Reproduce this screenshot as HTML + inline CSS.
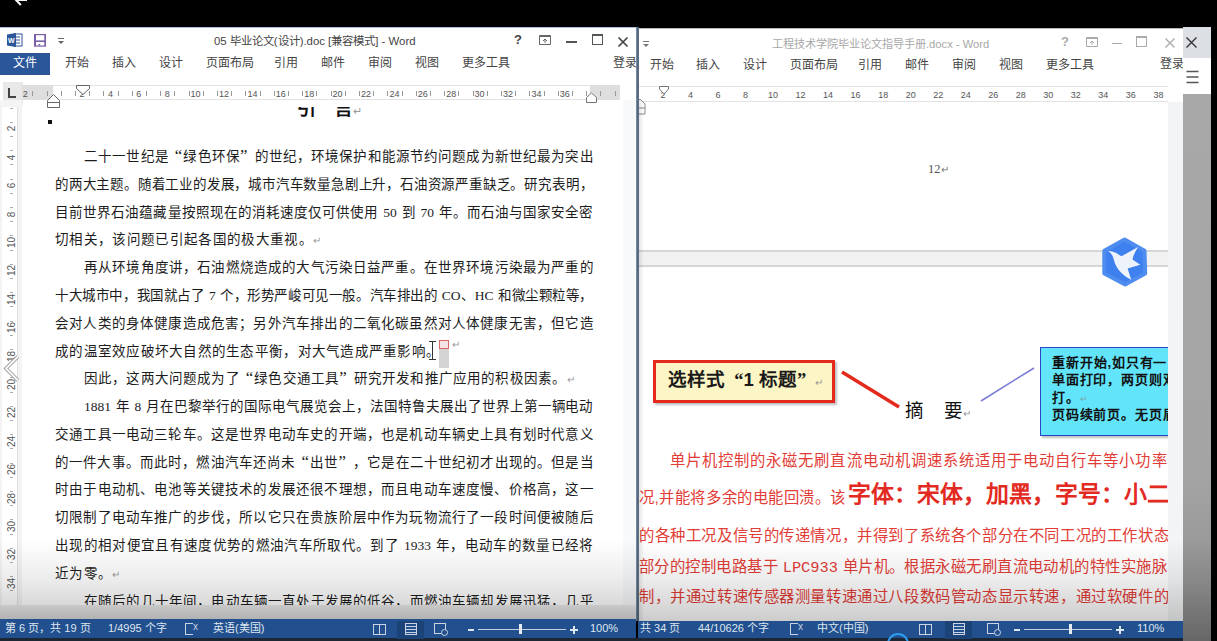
<!DOCTYPE html><html lang="zh-CN"><head><meta charset="utf-8"><style>
*{margin:0;padding:0;box-sizing:border-box}
html,body{width:1217px;height:641px;overflow:hidden;background:#000;font-family:"Liberation Sans",sans-serif}
.a{position:absolute}
.tab{position:absolute;font-size:12px;color:#444;white-space:nowrap;line-height:14px;margin-top:-1px}
.rn{position:absolute;font-size:9px;color:#555;width:20px;margin-left:-10px;text-align:center;line-height:10px}
.tk{position:absolute;width:1px;height:5px;background:#999}
.ln{position:absolute;height:20px;color:#1c1c1c;white-space:nowrap;line-height:20px;text-align:justify;text-align-last:justify}
.rl{position:absolute;height:20px;color:#e03030;white-space:nowrap;text-align:justify;text-align-last:justify;line-height:20px;font-family:"Liberation Serif",serif}
.sb{position:absolute;font-size:11px;color:#dfe6f0;white-space:nowrap;line-height:12px}
.vn{position:absolute;font-size:10px;color:#555;transform:rotate(-90deg);width:14px;text-align:center;line-height:9px}
</style></head><body>
<svg class="a" style="left:10px;top:0" width="24" height="8"><path d="M17,0 H5.5 M5.5,-0.5 L10.8,5" fill="none" stroke="#f4f4f4" stroke-width="2"/></svg>
<div class="a" style="left:0;top:27px;width:636px;height:614px;background:#fff;overflow:hidden">
<div class="a" style="left:0;top:0;width:636px;height:1px;background:#a9bedd"></div>
<svg class="a" style="left:6px;top:5px" width="17" height="16"><rect x="8" y="2" width="8" height="12" fill="#fff" stroke="#2b579a" stroke-width="1"/><path d="M10,5h4M10,8h4M10,11h4" stroke="#2b579a" stroke-width="1"/><path d="M1,2.5 L10,1 V15 L1,13.5z" fill="#2b579a"/><text x="2" y="11" font-size="7" font-weight="bold" fill="#fff" font-family="Liberation Sans">W</text></svg>
<svg class="a" style="left:33px;top:6px" width="14" height="14"><rect x="1" y="1" width="12" height="12.7" fill="#7b5fa8"/><rect x="3" y="2.2" width="8.3" height="5.2" fill="#fff"/><rect x="3" y="9" width="8.3" height="3.5" fill="#fff"/><rect x="5.5" y="11" width="1.7" height="1.5" fill="#7b5fa8"/></svg>
<svg class="a" style="left:57px;top:10px" width="9" height="8"><path d="M1,1.5h6" stroke="#666" stroke-width="1"/><path d="M1,4 h6 l-3,3z" fill="#666"/></svg>
<div class="a" style="left:214px;top:5px;font-size:11.4px;color:#444;white-space:nowrap">05 毕业论文(设计).doc [兼容模式] - Word</div>
<div class="a" style="left:514px;top:5px;font-size:13px;color:#444;font-weight:bold">?</div>
<svg class="a" style="left:538px;top:7px" width="14" height="12"><path d="M1.5,1.5h11v9h-11z" fill="none" stroke="#666" stroke-width="1"/><path d="M1.5,2.5h11" stroke="#666" stroke-width="1"/><path d="M7,9V5M5,7l2,-2l2,2" fill="none" stroke="#666" stroke-width="1"/></svg>
<div class="a" style="left:566px;top:14px;width:11px;height:1.5px;background:#555"></div>
<div class="a" style="left:592px;top:7px;width:11px;height:11px;border:1px solid #555;border-top-width:2px"></div>
<svg class="a" style="left:617px;top:9px" width="12" height="12"><path d="M1.5,1.5 L10.5,10.5 M10.5,1.5 L1.5,10.5" stroke="#444" stroke-width="1.7"/></svg>
<div class="a" style="left:0;top:26px;width:50px;height:22px;background:#2b579a"></div>
<div class="tab" style="left:13px;top:30px;color:#fff">文件</div>
<div class="tab" style="left:65px;top:30px;color:#444">开始</div>
<div class="tab" style="left:112px;top:30px;color:#444">插入</div>
<div class="tab" style="left:159px;top:30px;color:#444">设计</div>
<div class="tab" style="left:206px;top:30px;color:#444">页面布局</div>
<div class="tab" style="left:274px;top:30px;color:#444">引用</div>
<div class="tab" style="left:321px;top:30px;color:#444">邮件</div>
<div class="tab" style="left:368px;top:30px;color:#444">审阅</div>
<div class="tab" style="left:415px;top:30px;color:#444">视图</div>
<div class="tab" style="left:462px;top:30px;color:#444">更多工具</div>
<div class="tab" style="left:613px;top:30px">登录</div>
<div class="a" style="left:3px;top:55px;width:20px;height:23px;background:#e8e8e8"></div>
<div class="a" style="left:8px;top:61px;width:8px;height:10px;border-left:2px solid #444;border-bottom:2px solid #444"></div>
<div class="a" style="left:22px;top:58px;width:598px;height:15px;background:#fff;border-top:1px solid #e3e3e3;border-bottom:1px solid #e3e3e3"></div>
<div class="a" style="left:22px;top:58px;width:31px;height:15px;background:#dedede"></div>
<div class="a" style="left:590px;top:58px;width:30px;height:15px;background:#dedede"></div>
<div class="rn" style="left:25.2px;top:62px">2</div>
<div class="rn" style="left:82.0px;top:62px">2</div>
<div class="rn" style="left:110.4px;top:62px">4</div>
<div class="rn" style="left:138.8px;top:62px">6</div>
<div class="rn" style="left:167.2px;top:62px">8</div>
<div class="rn" style="left:195.6px;top:62px">10</div>
<div class="rn" style="left:224.0px;top:62px">12</div>
<div class="rn" style="left:252.4px;top:62px">14</div>
<div class="rn" style="left:280.8px;top:62px">16</div>
<div class="rn" style="left:309.2px;top:62px">18</div>
<div class="rn" style="left:337.6px;top:62px">20</div>
<div class="rn" style="left:366.0px;top:62px">22</div>
<div class="rn" style="left:394.4px;top:62px">24</div>
<div class="rn" style="left:422.8px;top:62px">26</div>
<div class="rn" style="left:451.2px;top:62px">28</div>
<div class="rn" style="left:479.6px;top:62px">30</div>
<div class="rn" style="left:508.0px;top:62px">32</div>
<div class="rn" style="left:536.4px;top:62px">34</div>
<div class="rn" style="left:564.8px;top:62px">36</div>
<div class="tk" style="left:32.3px;top:64px"></div>
<div class="tk" style="left:46.5px;top:64px"></div>
<div class="tk" style="left:60.7px;top:64px"></div>
<div class="tk" style="left:74.9px;top:64px"></div>
<div class="tk" style="left:89.1px;top:64px"></div>
<div class="tk" style="left:103.3px;top:64px"></div>
<div class="tk" style="left:117.5px;top:64px"></div>
<div class="tk" style="left:131.7px;top:64px"></div>
<div class="tk" style="left:145.9px;top:64px"></div>
<div class="tk" style="left:160.1px;top:64px"></div>
<div class="tk" style="left:174.3px;top:64px"></div>
<div class="tk" style="left:188.5px;top:64px"></div>
<div class="tk" style="left:202.7px;top:64px"></div>
<div class="tk" style="left:216.9px;top:64px"></div>
<div class="tk" style="left:231.1px;top:64px"></div>
<div class="tk" style="left:245.3px;top:64px"></div>
<div class="tk" style="left:259.5px;top:64px"></div>
<div class="tk" style="left:273.7px;top:64px"></div>
<div class="tk" style="left:287.9px;top:64px"></div>
<div class="tk" style="left:302.1px;top:64px"></div>
<div class="tk" style="left:316.3px;top:64px"></div>
<div class="tk" style="left:330.5px;top:64px"></div>
<div class="tk" style="left:344.7px;top:64px"></div>
<div class="tk" style="left:358.9px;top:64px"></div>
<div class="tk" style="left:373.1px;top:64px"></div>
<div class="tk" style="left:387.3px;top:64px"></div>
<div class="tk" style="left:401.5px;top:64px"></div>
<div class="tk" style="left:415.7px;top:64px"></div>
<div class="tk" style="left:429.9px;top:64px"></div>
<div class="tk" style="left:444.1px;top:64px"></div>
<div class="tk" style="left:458.3px;top:64px"></div>
<div class="tk" style="left:472.5px;top:64px"></div>
<div class="tk" style="left:486.7px;top:64px"></div>
<div class="tk" style="left:500.9px;top:64px"></div>
<div class="tk" style="left:515.1px;top:64px"></div>
<div class="tk" style="left:529.3px;top:64px"></div>
<div class="tk" style="left:543.5px;top:64px"></div>
<div class="tk" style="left:557.7px;top:64px"></div>
<div class="tk" style="left:571.9px;top:64px"></div>
<div class="tk" style="left:586.1px;top:64px"></div>
<div class="tk" style="left:600.3px;top:64px"></div>
<div class="tk" style="left:614.5px;top:64px"></div>
<svg class="a" style="left:45px;top:57px" width="70" height="25"><path d="M31.5,1.5 h13 v3 l-6.5,6 l-6.5,-6z" fill="#fff" stroke="#666" stroke-width="1"/><path d="M2.5,16.5 l6,-6 l6,6 v2 h-12z M2.5,18.5 h12 v5 h-12z" fill="#fff" stroke="#666" stroke-width="1"/></svg>
<svg class="a" style="left:585px;top:65px" width="13" height="12"><path d="M1.5,10.5 v-5 l5,-4.5 l5,4.5 v5z" fill="#fff" stroke="#777" stroke-width="1"/></svg>
<div class="a" style="left:0;top:73px;width:22px;height:541px;background:#f4f4f4"></div>
<div class="a" style="left:2px;top:80px;width:16px;height:534px;background:#fff;border-right:1px solid #e2e2e2"></div>
<div class="vn" style="left:4px;top:97.4px">2</div>
<div class="vn" style="left:4px;top:125.8px">4</div>
<div class="vn" style="left:4px;top:154.2px">6</div>
<div class="vn" style="left:4px;top:182.6px">8</div>
<div class="vn" style="left:4px;top:211.0px">10</div>
<div class="vn" style="left:4px;top:239.4px">12</div>
<div class="vn" style="left:4px;top:267.8px">14</div>
<div class="vn" style="left:4px;top:296.2px">16</div>
<div class="vn" style="left:4px;top:324.6px">18</div>
<div class="vn" style="left:4px;top:353.0px">20</div>
<div class="vn" style="left:4px;top:381.4px">22</div>
<div class="vn" style="left:4px;top:409.8px">24</div>
<div class="vn" style="left:4px;top:438.2px">26</div>
<div class="vn" style="left:4px;top:466.6px">28</div>
<div class="vn" style="left:4px;top:495.0px">30</div>
<div class="vn" style="left:4px;top:523.4px">32</div>
<div class="vn" style="left:4px;top:551.8px">34</div>
<div class="vn" style="left:4px;top:580.2px">36</div>
<div class="a" style="left:9.5px;top:80.6px;width:3px;height:1px;background:#aaa"></div>
<div class="a" style="left:9.5px;top:94.8px;width:3px;height:1px;background:#aaa"></div>
<div class="a" style="left:9.5px;top:109.0px;width:3px;height:1px;background:#aaa"></div>
<div class="a" style="left:9.5px;top:123.2px;width:3px;height:1px;background:#aaa"></div>
<div class="a" style="left:9.5px;top:137.4px;width:3px;height:1px;background:#aaa"></div>
<div class="a" style="left:9.5px;top:151.6px;width:3px;height:1px;background:#aaa"></div>
<div class="a" style="left:9.5px;top:165.8px;width:3px;height:1px;background:#aaa"></div>
<div class="a" style="left:9.5px;top:180.0px;width:3px;height:1px;background:#aaa"></div>
<div class="a" style="left:9.5px;top:194.2px;width:3px;height:1px;background:#aaa"></div>
<div class="a" style="left:9.5px;top:208.4px;width:3px;height:1px;background:#aaa"></div>
<div class="a" style="left:9.5px;top:222.6px;width:3px;height:1px;background:#aaa"></div>
<div class="a" style="left:9.5px;top:236.8px;width:3px;height:1px;background:#aaa"></div>
<div class="a" style="left:9.5px;top:251.0px;width:3px;height:1px;background:#aaa"></div>
<div class="a" style="left:9.5px;top:265.2px;width:3px;height:1px;background:#aaa"></div>
<div class="a" style="left:9.5px;top:279.4px;width:3px;height:1px;background:#aaa"></div>
<div class="a" style="left:9.5px;top:293.6px;width:3px;height:1px;background:#aaa"></div>
<div class="a" style="left:9.5px;top:307.8px;width:3px;height:1px;background:#aaa"></div>
<div class="a" style="left:9.5px;top:322.0px;width:3px;height:1px;background:#aaa"></div>
<div class="a" style="left:9.5px;top:336.2px;width:3px;height:1px;background:#aaa"></div>
<div class="a" style="left:9.5px;top:350.4px;width:3px;height:1px;background:#aaa"></div>
<div class="a" style="left:9.5px;top:364.6px;width:3px;height:1px;background:#aaa"></div>
<div class="a" style="left:9.5px;top:378.8px;width:3px;height:1px;background:#aaa"></div>
<div class="a" style="left:9.5px;top:393.0px;width:3px;height:1px;background:#aaa"></div>
<div class="a" style="left:9.5px;top:407.2px;width:3px;height:1px;background:#aaa"></div>
<div class="a" style="left:9.5px;top:421.4px;width:3px;height:1px;background:#aaa"></div>
<div class="a" style="left:9.5px;top:435.6px;width:3px;height:1px;background:#aaa"></div>
<div class="a" style="left:9.5px;top:449.8px;width:3px;height:1px;background:#aaa"></div>
<div class="a" style="left:9.5px;top:464.0px;width:3px;height:1px;background:#aaa"></div>
<div class="a" style="left:9.5px;top:478.2px;width:3px;height:1px;background:#aaa"></div>
<div class="a" style="left:9.5px;top:492.4px;width:3px;height:1px;background:#aaa"></div>
<div class="a" style="left:9.5px;top:506.6px;width:3px;height:1px;background:#aaa"></div>
<div class="a" style="left:9.5px;top:520.8px;width:3px;height:1px;background:#aaa"></div>
<div class="a" style="left:9.5px;top:535.0px;width:3px;height:1px;background:#aaa"></div>
<div class="a" style="left:9.5px;top:549.2px;width:3px;height:1px;background:#aaa"></div>
<div class="a" style="left:9.5px;top:563.4px;width:3px;height:1px;background:#aaa"></div>
<div class="a" style="left:9.5px;top:577.6px;width:3px;height:1px;background:#aaa"></div>
<div class="a" style="left:9.5px;top:591.8px;width:3px;height:1px;background:#aaa"></div>
<div class="a" style="left:623px;top:73px;width:13px;height:541px;background:#f8f9fa"></div>
<div class="a" style="left:290px;top:80px;width:80px;height:13px;overflow:hidden"><div style="position:absolute;left:7px;top:-9px;font-size:19px;font-weight:bold;color:#111;white-space:nowrap;line-height:22px">引</div><div style="position:absolute;left:44px;top:-9px;font-size:19px;font-weight:bold;color:#111;white-space:nowrap;line-height:22px">言<span style="font-size:11px;font-weight:normal;color:#999">↵</span></div></div>
<div class="a" style="left:48px;top:93px;width:4px;height:4px;background:#111"></div>
<div class="ln" style="left:84px;top:120.0px;width:508.5px;font-size:13.5px">二十一世纪是<span style="display:inline-block;width:1em;text-align:right;text-align-last:right"><span style="font-family:'Liberation Serif',serif;font-size:1.25em;line-height:1px">“</span></span>绿色环保<span style="display:inline-block;width:1em;text-align:left;text-align-last:left"><span style="font-family:'Liberation Serif',serif;font-size:1.25em;line-height:1px">”</span></span>的世纪，环境保护和能源节约问题成为新世纪最为突出</div>
<div class="ln" style="left:55px;top:147.8px;width:537.5px;font-size:13.5px">的两大主题。随着工业的发展，城市汽车数量急剧上升，石油资源严重缺乏。研究表明，</div>
<div class="ln" style="left:55px;top:175.6px;width:537.5px;font-size:13.5px">目前世界石油蕴藏量按照现在的消耗速度仅可供使用 <span style="font-family:'Liberation Serif',serif">50</span> 到 <span style="font-family:'Liberation Serif',serif">70</span> 年。而石油与国家安全密</div>
<div class="ln" style="left:55px;top:203.3px;width:256.5px;font-size:13.5px">切相关，该问题已引起各国的极大重视。</div>
<div class="ln" style="left:313px;top:203.3px;font-size:13.5px;text-align:left;text-align-last:left"><span style="color:#999;font-size:10px">↵</span></div>
<div class="ln" style="left:84px;top:231.1px;width:508.5px;font-size:13.5px">再从环境角度讲，石油燃烧造成的大气污染日益严重。在世界环境污染最为严重的</div>
<div class="ln" style="left:55px;top:258.9px;width:537.5px;font-size:13.5px">十大城市中，我国就占了 <span style="font-family:'Liberation Serif',serif">7</span> 个，形势严峻可见一般。汽车排出的 <span style="font-family:'Liberation Serif',serif">CO</span>、<span style="font-family:'Liberation Serif',serif">HC</span> 和微尘颗粒等，</div>
<div class="ln" style="left:55px;top:286.7px;width:537.5px;font-size:13.5px">会对人类的身体健康造成危害；另外汽车排出的二氧化碳虽然对人体健康无害，但它造</div>
<div class="ln" style="left:55px;top:314.5px;width:384.0px;font-size:13.5px">成的温室效应破坏大自然的生态平衡，对大气造成严重影响。</div>
<div class="ln" style="left:84px;top:342.2px;width:481.0px;font-size:13.5px">因此，这两大问题成为了<span style="display:inline-block;width:1em;text-align:right;text-align-last:right"><span style="font-family:'Liberation Serif',serif;font-size:1.25em;line-height:1px">“</span></span>绿色交通工具<span style="display:inline-block;width:1em;text-align:left;text-align-last:left"><span style="font-family:'Liberation Serif',serif;font-size:1.25em;line-height:1px">”</span></span>研究开发和推广应用的积极因素。</div>
<div class="ln" style="left:567px;top:342.2px;font-size:13.5px;text-align:left;text-align-last:left"><span style="color:#999;font-size:10px">↵</span></div>
<div class="ln" style="left:84px;top:370.0px;width:508.5px;font-size:13.5px"><span style="font-family:'Liberation Serif',serif">1881</span> 年 <span style="font-family:'Liberation Serif',serif">8</span> 月在巴黎举行的国际电气展览会上，法国特鲁夫展出了世界上第一辆电动</div>
<div class="ln" style="left:55px;top:397.8px;width:537.5px;font-size:13.5px">交通工具一电动三轮车。这是世界电动车史的开端，也是机动车辆史上具有划时代意义</div>
<div class="ln" style="left:55px;top:425.6px;width:537.5px;font-size:13.5px">的一件大事。而此时，燃油汽车还尚未<span style="display:inline-block;width:1em;text-align:right;text-align-last:right"><span style="font-family:'Liberation Serif',serif;font-size:1.25em;line-height:1px">“</span></span>出世<span style="display:inline-block;width:1em;text-align:left;text-align-last:left"><span style="font-family:'Liberation Serif',serif;font-size:1.25em;line-height:1px">”</span></span>，它是在二十世纪初才出现的。但是当</div>
<div class="ln" style="left:55px;top:453.4px;width:537.5px;font-size:13.5px">时由于电动机、电池等关键技术的发展还很不理想，而且电动车速度慢、价格高，这一</div>
<div class="ln" style="left:55px;top:481.1px;width:537.5px;font-size:13.5px">切限制了电动车推广的步伐，所以它只在贵族阶层中作为玩物流行了一段时间便被随后</div>
<div class="ln" style="left:55px;top:508.9px;width:537.5px;font-size:13.5px">出现的相对便宜且有速度优势的燃油汽车所取代。到了 <span style="font-family:'Liberation Serif',serif">1933</span> 年，电动车的数量已经将</div>
<div class="ln" style="left:55px;top:536.7px;width:56.0px;font-size:13.5px">近为零。</div>
<div class="ln" style="left:112px;top:536.7px;font-size:13.5px;text-align:left;text-align-last:left"><span style="color:#999;font-size:10px">↵</span></div>
<div class="ln" style="left:84px;top:564.5px;width:508.5px;font-size:13.5px">在随后的几十年间，电动车辆一直处于发展的低谷，而燃油车辆却发展迅猛，几乎</div>
<div class="a" style="left:429px;top:314px;width:7px;height:1px;background:#333"></div><div class="a" style="left:432px;top:314px;width:1.2px;height:18px;background:#333"></div><div class="a" style="left:429px;top:332px;width:7px;height:1px;background:#333"></div>
<div class="a" style="left:439px;top:315px;width:10px;height:26px;background:#d4d4d4"></div>
<div class="a" style="left:439px;top:313px;width:10px;height:9px;border:1px solid #d66;background:#f4e4e4"></div>
<div class="a" style="left:452px;top:312px;font-size:10px;color:#999;line-height:12px">↵</div>
</div>
<div class="a" style="left:638px;top:28px;width:545px;height:613px;background:#fff;overflow:hidden">
<div class="a" style="left:0;top:0;width:545px;height:1px;background:#b8b8b8"></div>
<svg class="a" style="left:4px;top:12px" width="9" height="8"><path d="M1,1.5h6" stroke="#777" stroke-width="1"/><path d="M1,4 h6 l-3,3z" fill="#777"/></svg>
<div class="a" style="left:134px;top:7px;font-size:11.2px;color:#a8a8a8;white-space:nowrap">工程技术学院毕业论文指导手册.docx - Word</div>
<div class="a" style="left:423px;top:6px;font-size:13px;color:#aaa;font-weight:bold">?</div>
<svg class="a" style="left:447px;top:8px" width="14" height="12"><path d="M1.5,1.5h11v9h-11z" fill="none" stroke="#aaa" stroke-width="1"/><path d="M1.5,2.5h11" stroke="#aaa" stroke-width="1"/><path d="M7,9V5M5,7l2,-2l2,2" fill="none" stroke="#aaa" stroke-width="1"/></svg>
<div class="a" style="left:474px;top:15px;width:10px;height:1px;background:#aaa"></div>
<div class="a" style="left:498px;top:8px;width:11px;height:11px;border:1px solid #aaa;border-top-width:2px"></div>
<svg class="a" style="left:526px;top:9px" width="12" height="12"><path d="M1.5,1.5 L10.5,10.5 M10.5,1.5 L1.5,10.5" stroke="#b0b0b0" stroke-width="1.5"/></svg>
<div class="tab" style="left:12px;top:31px">开始</div>
<div class="tab" style="left:58px;top:31px">插入</div>
<div class="tab" style="left:105px;top:31px">设计</div>
<div class="tab" style="left:152px;top:31px">页面布局</div>
<div class="tab" style="left:220px;top:31px">引用</div>
<div class="tab" style="left:267px;top:31px">邮件</div>
<div class="tab" style="left:314px;top:31px">审阅</div>
<div class="tab" style="left:361px;top:31px">视图</div>
<div class="tab" style="left:408px;top:31px">更多工具</div>
<div class="tab" style="left:522px;top:30px">登录</div>
<div class="a" style="left:0;top:58px;width:530px;height:16px;border-top:1px solid #e3e3e3;border-bottom:1px solid #e3e3e3"></div>
<div class="rn" style="left:25.0px;top:62px">2</div>
<div class="rn" style="left:52.5px;top:62px">4</div>
<div class="rn" style="left:80.0px;top:62px">6</div>
<div class="rn" style="left:107.6px;top:62px">8</div>
<div class="rn" style="left:135.1px;top:62px">10</div>
<div class="rn" style="left:162.6px;top:62px">12</div>
<div class="rn" style="left:190.1px;top:62px">14</div>
<div class="rn" style="left:217.6px;top:62px">16</div>
<div class="rn" style="left:245.2px;top:62px">18</div>
<div class="rn" style="left:272.7px;top:62px">20</div>
<div class="rn" style="left:300.2px;top:62px">22</div>
<div class="rn" style="left:327.7px;top:62px">24</div>
<div class="rn" style="left:355.2px;top:62px">26</div>
<div class="rn" style="left:382.8px;top:62px">28</div>
<div class="rn" style="left:410.3px;top:62px">30</div>
<div class="rn" style="left:437.8px;top:62px">32</div>
<div class="rn" style="left:465.3px;top:62px">34</div>
<div class="rn" style="left:492.8px;top:62px">36</div>
<div class="rn" style="left:520.4px;top:62px">38</div>
<svg class="a" style="left:20px;top:57px" width="14" height="12"><path d="M1.5,1.5 h9 v2.5 l-4.5,5 l-4.5,-5z" fill="#fff" stroke="#777" stroke-width="1"/></svg>
<svg class="a" style="left:-4px;top:68px" width="12" height="20"><path d="M1,8 l5,-5 l5,5 v10 h-10z M1,12 h10" fill="#fff" stroke="#888" stroke-width="1"/></svg>
<div class="a" style="left:290px;top:134px;font-size:12.5px;color:#555;white-space:nowrap;line-height:14px;font-family:'Liberation Serif',serif">12<span style="font-size:10px;color:#777">↵</span></div>
<div class="a" style="left:0;top:222px;width:545px;height:17px;background:#f2f2f2;border-top:2px solid #d6d6d6;border-bottom:2px solid #d6d6d6"></div>
<div class="a" style="left:15px;top:332px;width:182px;height:43px;background:#fcf6c6;border:3.5px solid #e42a1c;box-shadow:2px 2px 2px rgba(0,0,0,.25)"></div>
<div class="a" style="left:30px;top:342px;font-size:18.5px;font-weight:bold;color:#1a1a1a;white-space:nowrap;line-height:20px">选样式<span style="display:inline-block;width:1em;text-align:right;font-family:'Liberation Serif',serif">“</span>1 标题<span style="display:inline-block;width:1em;font-family:'Liberation Serif',serif">”</span><span style="font-size:10px;font-weight:normal;color:#999">↵</span></div>
<svg class="a" style="left:0;top:0" width="545" height="500"><line x1="204" y1="344" x2="261" y2="379" stroke="#e42a1c" stroke-width="3.5"/><line x1="343" y1="373" x2="396" y2="340" stroke="#7a7ad8" stroke-width="1.5"/></svg>
<div class="a" style="left:267px;top:372px;font-size:18.5px;color:#111;white-space:nowrap;line-height:22px">摘</div><div class="a" style="left:306px;top:372px;font-size:18.5px;color:#111;white-space:nowrap;line-height:22px">要<span style="font-size:10px;color:#999">↵</span></div>
<div class="a" style="left:402px;top:319px;width:140px;height:89px;background:#62e4fa;border:1.5px solid #2a44c8;box-shadow:2px 2px 2px rgba(0,0,0,.25)"></div>
<div class="a" style="left:414px;top:326.0px;width:114.5px;font-size:13px;font-weight:bold;color:#111;white-space:nowrap;line-height:18px;text-align:justify;text-align-last:justify">重新开始,如只有一</div>
<div class="a" style="left:530.0px;top:326.0px;font-size:13px;letter-spacing:1px;font-weight:bold;color:#111;white-space:nowrap;line-height:18px">页</div>
<div class="a" style="left:414px;top:343.4px;width:109.5px;font-size:13px;font-weight:bold;color:#111;white-space:nowrap;line-height:18px;text-align:justify;text-align-last:justify">单面打印，两页则</div>
<div class="a" style="left:525.0px;top:343.4px;font-size:13px;letter-spacing:1px;font-weight:bold;color:#111;white-space:nowrap;line-height:18px">双面</div>
<div class="a" style="left:414px;top:360.8px;font-size:13px;letter-spacing:1px;font-weight:bold;color:#111;white-space:nowrap;line-height:18px">打。<span style="font-size:9px;font-weight:normal;color:#7aa">↵</span></div>
<div class="a" style="left:414px;top:378.2px;width:109.5px;font-size:13px;font-weight:bold;color:#111;white-space:nowrap;line-height:18px;text-align:justify;text-align-last:justify">页码续前页。无页</div>
<div class="a" style="left:525.0px;top:378.2px;font-size:13px;letter-spacing:1px;font-weight:bold;color:#111;white-space:nowrap;line-height:18px">眉</div>
<svg class="a" style="left:462px;top:208px" width="50" height="52" viewBox="0 0 50 52"><path d="M24.6,3.5 L44.5,14.8 L45.2,37.5 L25.2,48.5 L4.3,37.5 L4.3,14.8z" fill="#3e80ee" stroke="#4f8cf0" stroke-width="4" stroke-linejoin="round"/><path d="M7.7,15 C12,15.3 16,16.3 18.5,18.6 L21.5,20.2 L38.1,11 C35,16 33,20 32.5,23.5 L40.2,28.8 L27.6,32.5 L31.3,43.8 C27,41.5 22,38.5 18.7,34 C15.5,30 14,25 13.2,21.5 C12.5,18.8 10,16 7.7,15z" fill="#eef3fb"/></svg>
<div class="a" style="left:32px;top:422.6px;width:496.5px;font-size:15.35px;color:#e23c36;white-space:nowrap;line-height:20px;text-align:justify;text-align-last:justify">单片机控制的永磁无刷直流电动机调速系统适用于电动自行车等小功率</div>
<div class="a" style="left:1px;top:498.2px;width:529.5px;font-size:15.35px;color:#e23c36;white-space:nowrap;line-height:20px;text-align:justify;text-align-last:justify">的各种工况及信号的传递情况，并得到了系统各个部分在不同工况的工作状态</div>
<div class="a" style="left:1px;top:529.3px;width:527.5px;font-size:15.35px;color:#e23c36;white-space:nowrap;line-height:20px;text-align:justify;text-align-last:justify">部分的控制电路基于 <span style="font-family:'Liberation Mono',monospace">LPC933</span> 单片机。根据永磁无刷直流电动机的特性实施脉</div>
<div class="a" style="left:530.0px;top:529.3px;font-size:15.35px;color:#e23c36;white-space:nowrap;line-height:20px">冲</div>
<div class="a" style="left:1px;top:559.0px;width:529.5px;font-size:15.35px;color:#e23c36;white-space:nowrap;line-height:20px;text-align:justify;text-align-last:justify">制，并通过转速传感器测量转速通过八段数码管动态显示转速，通过软硬件的</div>
<div class="a" style="left:1px;top:459.7px;width:206.5px;font-size:15.35px;color:#e23c36;white-space:nowrap;line-height:20px;text-align:justify;text-align-last:justify">况,并能将多余的电能回溃。该</div>
<div class="a" style="left:210px;top:451.7px;width:320px;font-size:22.9px;font-weight:bold;color:#e32a22;white-space:nowrap;line-height:28px;text-align:justify;text-align-last:justify">字体：宋体，加黑，字号：小二</div>
<div class="a" style="left:530px;top:74px;width:15px;height:520px;background:#f3f4f5"></div>
</div>
<div class="a" style="left:635.5px;top:27px;width:3px;height:594px;background:linear-gradient(to right,#8fa3bd,#56687f 40%,#5d6f86)"></div><div class="a" style="left:638.5px;top:100px;width:5px;height:521px;background:linear-gradient(to right,rgba(0,0,0,.10),rgba(0,0,0,0))"></div>
<div class="a" style="left:1183px;top:27px;width:28px;height:31px;background:#dcdfe3"></div>
<div class="a" style="left:1183px;top:58px;width:28px;height:36px;background:#fff"></div>
<div class="a" style="left:1183px;top:94px;width:28px;height:547px;background:linear-gradient(to bottom,#a8a8a8 0%,#a4a4a4 70%,#8a8a8a 100%)"></div>
<svg class="a" style="left:1183px;top:27px" width="28" height="60"><path d="M3.5,10.5 L13.5,20.5 M13.5,10.5 L3.5,20.5" stroke="#333" stroke-width="1.4"/><path d="M3.5,44.5h12M3.5,50h12M3.5,55.5h12" stroke="#555" stroke-width="1.5"/></svg>
<div class="a" style="left:0;top:605px;width:636px;height:15px;background:linear-gradient(to bottom,#ececec,#dcdcdc)"></div>
<div class="a" style="left:0;top:540px;width:1217px;height:101px;background:linear-gradient(to bottom,rgba(0,0,0,0) 0%,rgba(0,0,0,.08) 40%,rgba(0,0,0,.26) 100%)"></div>
<div class="a" style="left:0;top:619px;width:636px;height:22px;background:#22508e"></div>
<div class="a" style="left:638px;top:621px;width:545px;height:20px;background:#22508e"></div>
<div class="a" style="left:0;top:638px;width:1183px;height:3px;background:#1d2633"></div>
<div class="sb" style="left:5px;top:622px">第 6 页，共 19 页</div>
<div class="sb" style="left:108px;top:622px">1/4995 个字</div>
<div class="sb" style="left:213px;top:622px">英语(美国)</div>
<div class="sb" style="left:640px;top:622px">共 34 页</div>
<div class="sb" style="left:698px;top:622px">44/10626 个字</div>
<div class="sb" style="left:817px;top:622px">中文(中国)</div>
<div class="sb" style="left:590px;top:622px">100%</div>
<div class="sb" style="left:1137px;top:622px">110%</div>
<div class="a" style="left:468px;top:629px;width:6px;height:1.5px;background:#dde5f0"></div>
<div class="a" style="left:478px;top:629px;width:88px;height:1px;background:#c5d0e0"></div>
<div class="a" style="left:519px;top:624px;width:3px;height:10px;background:#e5ebf3"></div>
<div class="a" style="left:570px;top:629px;width:8px;height:1.5px;background:#dde5f0"></div>
<div class="a" style="left:573px;top:626px;width:1.5px;height:8px;background:#dde5f0"></div>
<div class="a" style="left:1014px;top:629px;width:6px;height:1.5px;background:#dde5f0"></div>
<div class="a" style="left:1024px;top:629px;width:88px;height:1px;background:#c5d0e0"></div>
<div class="a" style="left:1069px;top:624px;width:3px;height:10px;background:#e5ebf3"></div>
<div class="a" style="left:1116px;top:629px;width:8px;height:1.5px;background:#dde5f0"></div>
<div class="a" style="left:1119px;top:626px;width:1.5px;height:8px;background:#dde5f0"></div>
<div class="a" style="left:373px;top:624px;width:13px;height:11px;border:1px solid #c9d3e2;border-top-width:1px"></div><div class="a" style="left:379px;top:624px;width:1px;height:11px;background:#c9d3e2"></div>
<div class="a" style="left:397px;top:621px;width:27px;height:18px;background:#1c4378"></div>
<div class="a" style="left:405px;top:623px;width:12px;height:12px;border:1px solid #c9d3e2;background:repeating-linear-gradient(to bottom,#22508e 0 2px,#c9d3e2 2px 3px)"></div>
<div class="a" style="left:434px;top:623px;width:12px;height:11px;border:1px solid #c9d3e2"></div><div class="a" style="left:441px;top:629px;width:7px;height:7px;border-radius:50%;background:#22508e;border:1px solid #c9d3e2"></div>
<div class="a" style="left:919px;top:624px;width:13px;height:11px;border:1px solid #c9d3e2;border-top-width:1px"></div><div class="a" style="left:925px;top:624px;width:1px;height:11px;background:#c9d3e2"></div>
<div class="a" style="left:945px;top:621px;width:27px;height:18px;background:#1c4378"></div>
<div class="a" style="left:953px;top:623px;width:12px;height:12px;border:1px solid #c9d3e2;background:repeating-linear-gradient(to bottom,#22508e 0 2px,#c9d3e2 2px 3px)"></div>
<div class="a" style="left:987px;top:623px;width:12px;height:11px;border:1px solid #c9d3e2"></div><div class="a" style="left:994px;top:629px;width:7px;height:7px;border-radius:50%;background:#22508e;border:1px solid #c9d3e2"></div>
<div class="a" style="left:185px;top:623px;width:8px;height:12px;border:1px solid #c9d3e2;border-right:none"></div><div class="a" style="left:193px;top:621px;font-size:10px;color:#c9d3e2">x</div>
<div class="a" style="left:790px;top:623px;width:8px;height:12px;border:1px solid #c9d3e2;border-right:none"></div><div class="a" style="left:798px;top:621px;font-size:10px;color:#c9d3e2">x</div>
<div class="a" style="left:887px;top:633px;width:22px;height:22px;border-radius:50%;border:2px solid #2f9cf0"></div>
<svg class="a" style="left:0;top:350px" width="24" height="36"><path d="M18,6.5 L6,18.5 L18,30.5" fill="none" stroke="#9a9a9a" stroke-width="3.6"/><path d="M18,6.5 L6,18.5 L18,30.5" fill="none" stroke="#fafafa" stroke-width="1.8"/></svg>
</body></html>
